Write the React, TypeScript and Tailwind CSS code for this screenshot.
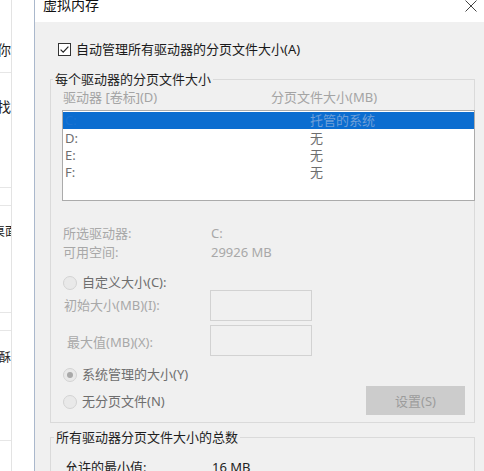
import React from "react";

const FONT = '"Noto Sans", "Noto Sans CJK SC", sans-serif';

function Radio({ checked }: { checked?: boolean }) {
  return (
    <svg width="14" height="14" viewBox="0 0 14 14" className="shrink-0">
      <circle cx="7" cy="7" r="6.5" fill="#e9e9e9" stroke="#d2d2d2" />
      {checked && <circle cx="7" cy="7" r="3" fill="#a9a9a9" />}
    </svg>
  );
}

function CheckBox() {
  return (
    <svg width="13" height="13" viewBox="0 0 13 13" className="shrink-0">
      <rect x="0.5" y="0.5" width="12" height="12" fill="#ffffff" stroke="#333333" />
      <path d="M2.6 6.6 L5.2 9.2 L10.4 3.6" fill="none" stroke="#222222" strokeWidth="1.2" />
    </svg>
  );
}

export default function App() {
  return (
    <div
      className="w-[484px] h-[471px] overflow-hidden flex bg-white"
      style={{ fontFamily: FONT }}
    >
      {/* background window strip */}
      <div className="w-[12px] shrink-0 border-r border-[#e3e3e3] flex flex-col text-[14px] leading-[18px] text-[#222]">
        <div className="h-[73px] border-b border-[#e6e6e6] overflow-hidden flex justify-end pt-[41px]">
          <span className="whitespace-nowrap">你</span>
        </div>
        <div className="h-[115px] border-b border-[#e6e6e6] overflow-hidden flex justify-end pt-[25px]">
          <span className="whitespace-nowrap">找</span>
        </div>
        <div className="h-[18px] border-b border-[#e6e6e6]" />
        <div className="h-[107px] border-b border-[#e6e6e6] overflow-hidden flex pt-[17px] text-[12px]">
          <span className="whitespace-nowrap ml-[-7px]">桌面</span>
        </div>
        <div className="h-[18px] border-b border-[#e6e6e6]" />
        <div className="h-[110px] border-b border-[#e6e6e6] overflow-hidden flex justify-end pt-[18px] text-[12px]">
          <span className="whitespace-nowrap">酥</span>
        </div>
      </div>
      <div className="w-[22px] shrink-0 bg-white" />

      {/* dialog */}
      <div className="flex-1 flex flex-col border-l border-[#aab8cc] min-w-0">
        {/* title bar */}
        <div className="h-[22px] shrink-0 bg-white flex items-start justify-between">
          <span className="ml-[8px] mt-[-2px] text-[14px] leading-[14px] text-[#111]">虚拟内存</span>
          <svg width="12" height="12" viewBox="0 0 12 12" className="mr-[7px] mt-[0px]">
            <path d="M0.5 0.5 L11.5 11.5 M11.5 0.5 L0.5 11.5" stroke="#444" strokeWidth="1" />
          </svg>
        </div>

        {/* body */}
        <div className="flex-1 bg-[#f0f0f0] flex flex-col text-[13px]">
          <div className="mt-[19px] ml-[23px] h-[16px] flex items-center gap-[5px]">
            <CheckBox />
            <span className="leading-[16px] text-[#1a1a1a] whitespace-nowrap">
              自动管理所有驱动器的分页文件大小(A)
            </span>
          </div>

          {/* group 1 */}
          <fieldset className="mt-[15px] ml-[15px] w-[425px] border border-[#dadada]">
            <legend className="ml-[2px] px-[2px] leading-[14px] text-[#1e1e1e]">
              每个驱动器的分页文件大小
            </legend>
            <div className="mt-[3px] pl-[12px] flex leading-[16px] text-[#a4a4a4]">
              <span className="w-[208px] whitespace-nowrap">驱动器 [卷标](D)</span>
              <span className="whitespace-nowrap">分页文件大小(MB)</span>
            </div>
            <div className="mt-[5px] ml-[11px] mr-[-1px] h-[91px] border border-[#ababab] bg-white pt-px">
              <div className="h-[17px] bg-[#0b6dd0] flex items-center leading-[17px]">
                <span className="w-[247px] pl-[2px] text-[#1a73d2]">C:</span>
                <span className="text-[#6f9fd8] whitespace-nowrap">托管的系统</span>
              </div>
              <div className="flex flex-col pt-px text-[#6e6e6e] leading-[17px]">
                {["D:", "E:", "F:"].map((d) => (
                  <div key={d} className="h-[17px] flex items-center">
                    <span className="w-[247px] pl-[2px]">{d}</span>
                    <span>无</span>
                  </div>
                ))}
              </div>
            </div>

            <div className="mt-[23px] flex flex-col text-[#a8a8a8] leading-[19px]">
              <div className="h-[19px] pl-[12px] flex">
                <span className="w-[148px]">所选驱动器:</span>
                <span>C:</span>
              </div>
              <div className="h-[19px] pl-[12px] flex">
                <span className="w-[148px]">可用空间:</span>
                <span>29926 MB</span>
              </div>
            </div>

            <div className="mt-[11px] h-[19px] pl-[12px] flex items-center gap-[5px] text-[#6e6e6e] leading-[19px]">
              <Radio />
              <span>自定义大小(C):</span>
            </div>

            <div className="mt-[-2px] h-[31px] pl-[13px] flex items-center text-[#a8a8a8] leading-[19px]">
              <span className="w-[146px] whitespace-nowrap">初始大小(MB)(I):</span>
              <div className="w-[102px] h-[31px] border border-[#d2d2d2] bg-[#f0f0f0]" />
            </div>
            <div className="mt-[4px] h-[31px] pl-[16px] flex items-center text-[#a8a8a8] leading-[19px]">
              <span className="w-[143px] whitespace-nowrap pt-[3px]">最大值(MB)(X):</span>
              <div className="w-[102px] h-[31px] border border-[#d2d2d2] bg-[#f0f0f0]" />
            </div>

            <div className="mt-[9px] pb-[11px] flex items-end">
              <div className="flex flex-col text-[#6e6e6e] leading-[19px]">
                <div className="h-[19px] pl-[12px] flex items-center gap-[5px]">
                  <Radio checked />
                  <span>系统管理的大小(Y)</span>
                </div>
                <div className="mt-[8px] h-[19px] pl-[12px] flex items-center gap-[5px]">
                  <Radio />
                  <span>无分页文件(N)</span>
                </div>
              </div>
              <div className="ml-auto mr-[9px] mb-[-4px] w-[99px] h-[29px] bg-[#cccccc] flex items-center justify-center text-[#9c9c9c] leading-[16px]">
                设置(S)
              </div>
            </div>
          </fieldset>

          {/* group 2 */}
          <fieldset className="mt-[7px] ml-[15px] w-[425px] border border-[#dadada] h-[80px]">
            <legend className="ml-[3px] px-[2px] leading-[14px] text-[#1e1e1e]">
              所有驱动器分页文件大小的总数
            </legend>
            <div className="mt-[14px] h-[19px] pl-[14px] flex leading-[19px] text-[#222]">
              <span className="w-[147px]">允许的最小值:</span>
              <span>16 MB</span>
            </div>
          </fieldset>
        </div>
      </div>
    </div>
  );
}
